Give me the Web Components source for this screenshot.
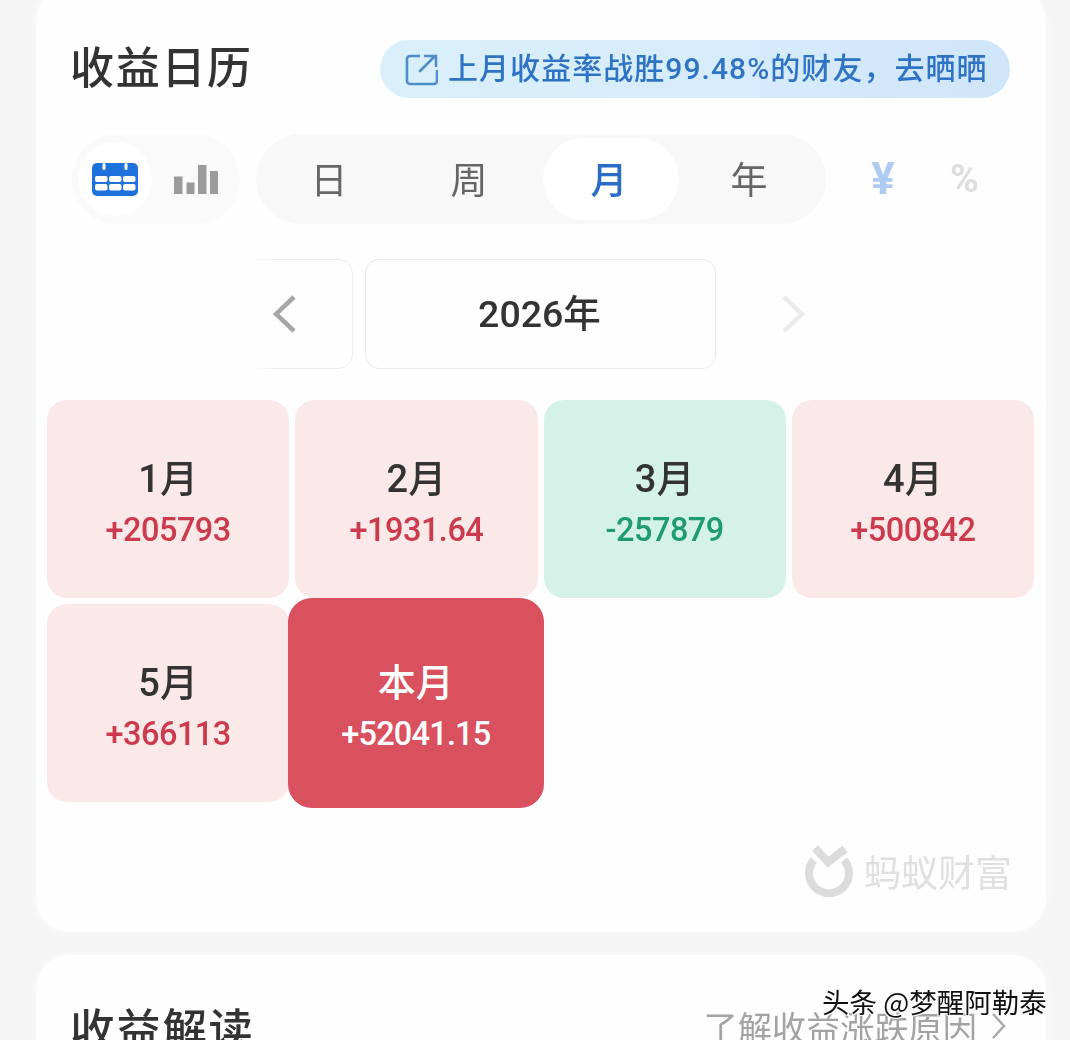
<!DOCTYPE html>
<html lang="zh"><head><meta charset="utf-8"><title>收益日历</title>
<style>
html,body{margin:0;height:1040px;overflow:hidden;background:#f5f5f5}
body{position:relative;padding:0 24px 0 36px;box-sizing:border-box;font-family:"Roboto","Noto Sans CJK SC",sans-serif;color:#333}
</style></head><body>
<x-card first>
  <x-head title-text="收益日历"><x-share-pill slot="aside">上月收益率战胜99.48%的财友，去晒晒</x-share-pill></x-head>
  <x-controls></x-controls>
  <x-year-nav year="2026年"></x-year-nav>
  <x-month-grid>
    <x-month label="1月" value="+205793"></x-month>
    <x-month label="2月" value="+1931.64"></x-month>
    <x-month label="3月" value="-257879" tone="down"></x-month>
    <x-month label="4月" value="+500842"></x-month>
    <x-month label="5月" value="+366113"></x-month>
    <x-month label="本月" value="+52041.15" tone="now"></x-month>
  </x-month-grid>
  <x-brand>蚂蚁财富</x-brand>
</x-card>
<x-card>
  <x-head title-text="收益解读" class="second"><x-more slot="aside">了解收益涨跌原因</x-more></x-head>
</x-card>
<x-mark>头条 @梦醒阿勒泰</x-mark>
<script>
function def(name, html){
  customElements.define(name, class extends HTMLElement{
    connectedCallback(){
      if(this.shadowRoot) return;
      const r=this.attachShadow({mode:'open'});
      r.innerHTML=typeof html==='function'?html(this):html;
    }
  });
}
def('x-card',`<style>
:host{display:block;background:#fefefe;border-radius:34px;padding:0 36px;box-shadow:0 0 7px 1px #fbfbfb;box-sizing:border-box;filter:blur(.45px)}
:host([first]){margin-top:-12px;padding-top:52px;padding-bottom:35px}
:host(:not([first])){margin-top:23px;padding-top:50px;height:200px}
</style><slot></slot>`);
def('x-head',h=>`<style>
:host{display:flex;justify-content:space-between;align-items:center;height:58px}
h2{margin:-8px 0 0 -2px;font:500 44px/58px "Noto Sans CJK SC",sans-serif;letter-spacing:1.7px;color:#333}
:host(.second){height:46px}
:host(.second) h2{margin-top:-2px;font-size:44.5px}
</style><h2>${h.getAttribute('title-text')}</h2><slot name="aside"></slot>`);
def('x-share-pill',`<style>
:host{display:flex;align-items:center;width:630px;height:58px;box-sizing:border-box;padding-left:25px;border-radius:29px;background:linear-gradient(90deg,#d9f0fb,#d6ebfb 60%,#cfe5fa);color:#2f74c4;font:500 30px/60px "Roboto","Noto Sans CJK SC",sans-serif;letter-spacing:1.05px;white-space:nowrap}
svg{flex:none;margin-right:10px}
</style><svg width="33" height="33" viewBox="0 0 33 33" fill="none" stroke="#4e8dc8" stroke-width="2.6"><path d="M15 3H5a3 3 0 0 0-3 3v22a3 3 0 0 0 3 3h24a3 3 0 0 0 3-3V17"/><path d="M15 18 29 4M20 3h11v10" stroke-linecap="round"/></svg><slot></slot>`);
def('x-controls',`<style>
:host{display:flex;align-items:center;margin-top:36px;height:90px;gap:16px;font:400 37px/1 "Noto Sans CJK SC",sans-serif}
.view{display:flex;align-items:center;width:168px;height:90px;background:#fafafa;border-radius:45px;box-sizing:border-box;padding-left:6px}
.cal{width:74px;height:74px;border-radius:37px;background:#fff;display:grid;place-items:center}
.bars{margin-left:22px;display:flex}
.seg{display:grid;grid-template-columns:repeat(4,140px);width:570px;height:90px;box-sizing:border-box;padding:0 7px 0 3px;background:#f8f8f8;border-radius:45px;color:#666;align-items:center;text-align:center}
.seg span{display:block;line-height:80px;height:82px;border-radius:41px}
.seg .on{background:#fff;color:#2a6cc6;font-weight:500;margin-left:4px;padding-right:4px}
.unit{display:flex;margin-left:10px;font:700 44px/90px "Roboto",sans-serif;text-align:center}
.unit .y{color:#aecbf2;width:62px}
.unit .p{color:#dedede;width:75px;margin-left:13px;font-size:39px}
</style>
<div class="view"><div class="cal"><svg width="46" height="33" viewBox="0 0 46 33"><rect width="46" height="33" rx="5" fill="#1f72dc"/><g fill="#fff"><rect x="10.500" y="0" width="3" height="7" rx="1.500"/><rect x="32.500" y="0" width="3" height="7" rx="1.500"/><rect x="3" y="13" width="12.500" height="6" rx="2"/><rect x="17" y="13" width="12.500" height="6" rx="2"/><rect x="31" y="13" width="12.500" height="6" rx="2"/><rect x="3" y="21" width="12.500" height="6.500" rx="2"/><rect x="17" y="21" width="12.500" height="6.500" rx="2"/><rect x="31" y="21" width="12.500" height="6.500" rx="2"/></g></svg></div>
<svg class="bars" width="44" height="29" viewBox="0 0 44 29" fill="#9b9b9b"><rect y="11.500" width="8.500" height="17.500"/><rect x="12.500" y="17.500" width="8" height="11.500"/><rect x="24" y="0" width="8.500" height="29"/><rect x="36" y="6" width="8" height="23"/></svg></div>
<div class="seg"><span>日</span><span>周</span><span class="on">月</span><span>年</span></div>
<div class="unit"><span class="y">¥</span><span class="p">%</span></div>`);
def('x-year-nav',h=>`<style>
:host{display:flex;justify-content:center;gap:12px;margin:35px 1px 0 -1px;height:110px}
.box{box-sizing:border-box;height:110px;border-radius:14px;display:grid;place-items:center;position:relative}
.side{width:143px}
.prev svg{margin-left:5px}
.next svg{margin-right:10px}
.prev::before{content:"";position:absolute;inset:0;border:1px solid #ececec;border-radius:14px;-webkit-mask-image:linear-gradient(90deg,transparent 30%,#000 45%);mask-image:linear-gradient(90deg,transparent 30%,#000 45%)}
.mid{width:351px;border:1px solid #ebebeb;font:500 37.500px/1 "Roboto","Noto Sans CJK SC",sans-serif;color:#333;padding:2px 1px 0 0}
</style>
<div class="box side prev"><svg width="24" height="38" viewBox="0 0 24 38" fill="none" stroke="#a6a6a6" stroke-width="4.500"><path d="M22 2 4 19l18 17"/></svg></div>
<div class="box mid">${h.getAttribute('year')}</div>
<div class="box side next"><svg width="24" height="38" viewBox="0 0 24 38" fill="none" stroke="#ebebeb" stroke-width="4.500"><path d="M2 2l18 17L2 36"/></svg></div>`);
def('x-month-grid',`<style>
:host{display:grid;grid-template-columns:repeat(4,1fr);grid-auto-rows:198px;gap:6px;margin:31px -24px 0 -25px}
</style><slot></slot>`);
def('x-month',h=>`<style>
:host{display:flex;flex-direction:column;align-items:center;justify-content:center;border-radius:20px;background:#fbe9ea;color:#333;padding-top:6px;box-sizing:border-box}
:host([tone=down]){background:#d5f2e9}
:host([tone=now]){background:#d9505f;color:#fff;margin:-6px -6px -6px -7px;border-radius:24px;position:relative}
b{font:500 38px/52px "Roboto","Noto Sans CJK SC",sans-serif}
i{font:500 32.500px/44px "Roboto",sans-serif;color:#cb3a4d;letter-spacing:-.5px;font-style:normal;margin-top:3px}
:host([tone=down]) i{color:#1f9a72}
:host([tone=now]) i{color:#fff;letter-spacing:-.8px}
</style><b>${h.getAttribute('label')}</b><i>${h.getAttribute('value')}</i>`);
def('x-brand',`<style>
:host{display:flex;justify-content:flex-end;align-items:center;gap:11px;margin:43px -2px 0 0;height:52px;color:#e0e0e0;font:400 37px/52px "Noto Sans CJK SC",sans-serif}
</style><svg width="48" height="52" viewBox="0 0 48 52" fill="none" stroke="#dcdcdc" stroke-width="8"><path d="M9 15A20 20 0 1 0 39 15"/><path d="M10 3l13 14L40 4"/></svg><span><slot></slot></span>`);
def('x-more',`<style>
:host{display:flex;align-items:center;gap:14px;margin:-5px 4px 0 0;color:#a3a3a3;font:400 34.200px/46px "Noto Sans CJK SC",sans-serif;white-space:nowrap}
</style><slot></slot><svg width="15" height="28" viewBox="0 0 15 28" fill="none" stroke="#aaa" stroke-width="2.500"><path d="M2 2l11 12L2 26"/></svg>`);
def('x-mark',`<style>
:host{position:absolute;left:822px;top:986px;font:400 27.500px/30px "Noto Sans CJK SC",sans-serif;color:#111;white-space:nowrap;text-shadow:1px 1px 0 #fff,-1px 1px 0 #fff,1px -1px 0 #fff,-1px -1px 0 #fff}
</style><slot></slot>`);
</script>
</body></html>
